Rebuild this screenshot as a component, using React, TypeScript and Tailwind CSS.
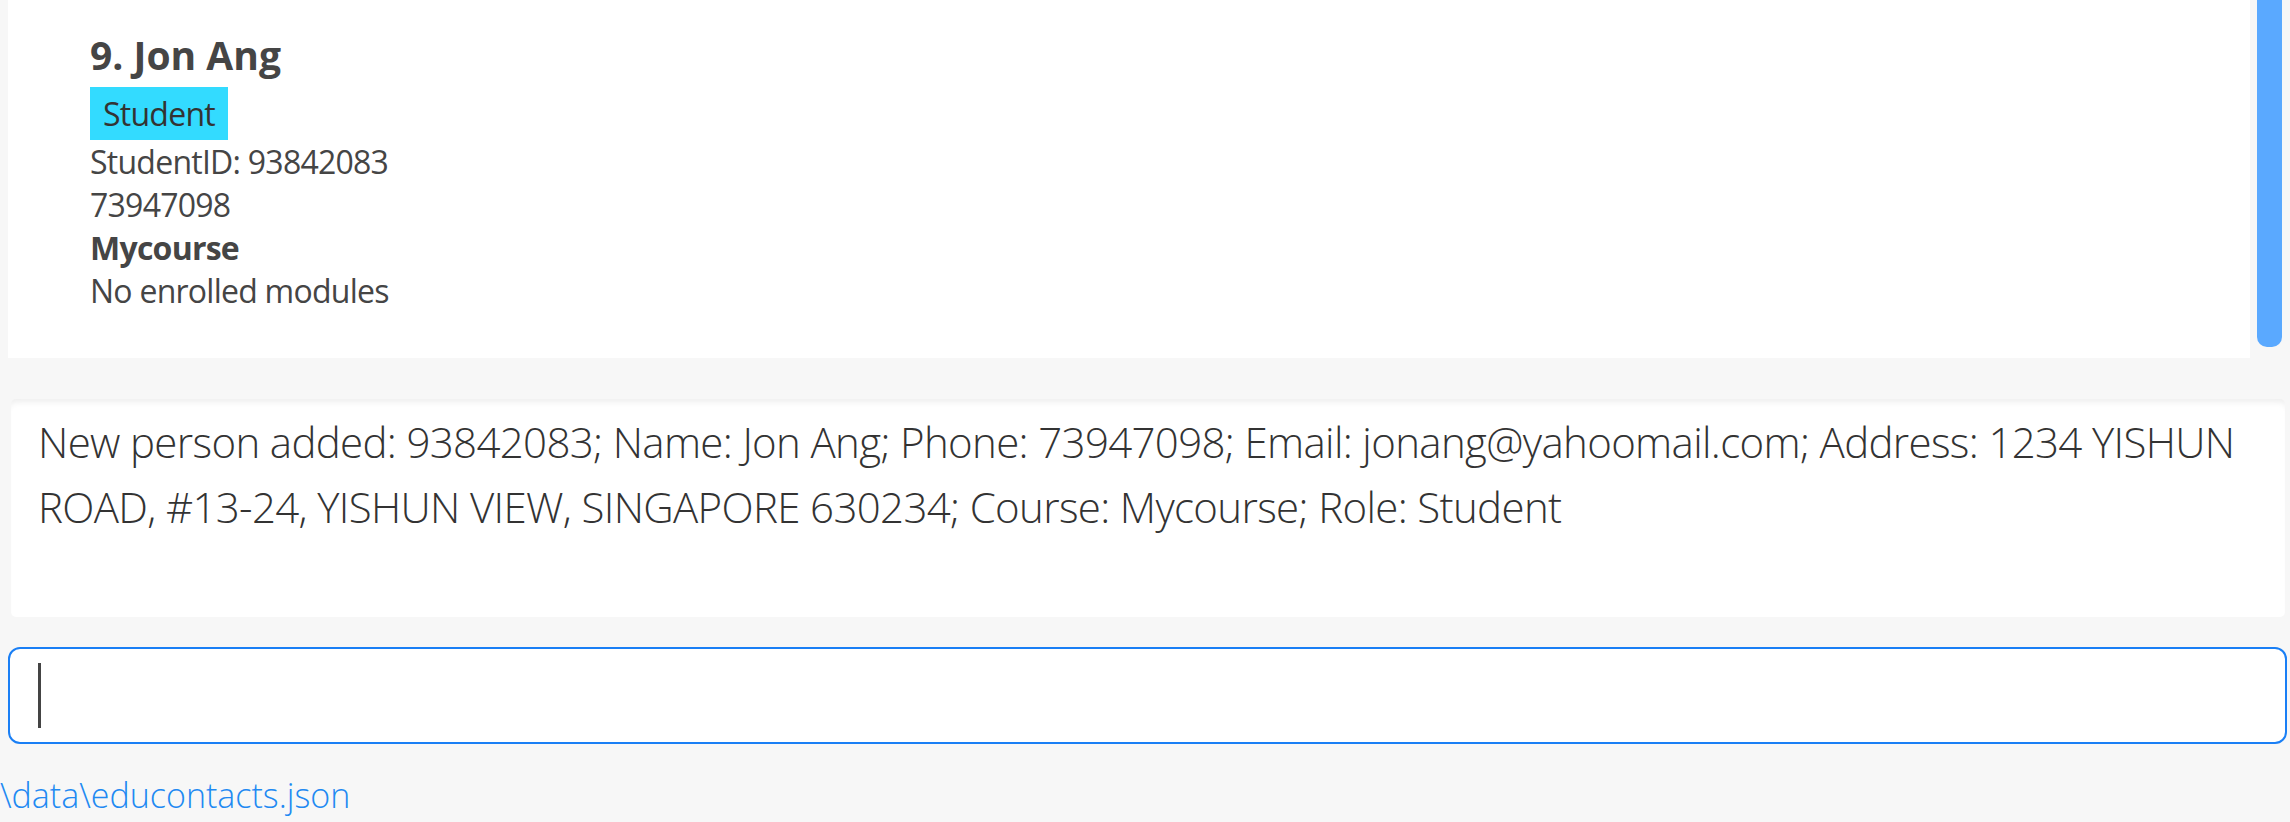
import React from "react";

const font = { fontFamily: '"Open Sans", "Noto Sans", sans-serif' };

export default function App() {
  return (
    <div
      className="w-[2290px] h-[822px] bg-[#f7f7f7] overflow-hidden flex flex-col"
      style={font}
    >
      {/* list panel */}
      <div className="flex flex-row h-[358px]">
        <div className="ml-[8px] w-[2242px] h-[358px] bg-white pl-[82px] pt-[32px] text-[#454545]">
          <div className="text-[39px] leading-[45px] font-bold">9. Jon Ang</div>
          <div className="mt-[10px] flex">
            <span className="bg-[#33dbff] h-[53px] px-[13px] text-[32px] leading-[53px] tracking-[-0.75px] text-[#333]">
              Student
            </span>
          </div>
          <div className="text-[32px] leading-[43px] tracking-[-0.75px]">StudentID: 93842083</div>
          <div className="text-[32px] leading-[43px] tracking-[-0.75px]">73947098</div>
          <div className="text-[32px] leading-[43px] tracking-[-0.75px] font-bold">Mycourse</div>
          <div className="text-[32px] leading-[43px] tracking-[-0.75px]">No enrolled modules</div>
        </div>
        <div className="ml-[7px] w-[25px] h-[347px] bg-[#5aa9ff] rounded-b-[10px]" />
      </div>

      {/* result display */}
      <div className="mt-[41px] ml-[11px] w-[2274px] h-[218px] bg-white rounded-[5px] shadow-[inset_0_7px_6px_-4px_rgba(0,0,0,0.07)] pl-[27px] pt-[10px] text-[#333] font-light text-[42px] leading-[65px] tracking-[-0.65px]">
        <div className="whitespace-nowrap">
          New person added: 93842083; Name: Jon Ang; Phone: 73947098; Email: jonang@yahoomail.com; Address: 1234 YISHUN
        </div>
        <div className="whitespace-nowrap">
          ROAD, #13-24, YISHUN VIEW, SINGAPORE 630234; Course: Mycourse; Role: Student
        </div>
      </div>

      {/* command box */}
      <div className="mt-[30px] ml-[8px] w-[2279px] h-[97px] bg-white border-2 border-[#1a7ff5] rounded-[12px] flex items-center pl-[28px]">
        <div className="w-[3px] h-[65px] bg-[#444]" />
      </div>

      {/* status bar */}
      <div className="mt-[29px] text-[34px] leading-[45px] text-[#2189f2] font-light">
        \data\educontacts.json
      </div>
    </div>
  );
}
